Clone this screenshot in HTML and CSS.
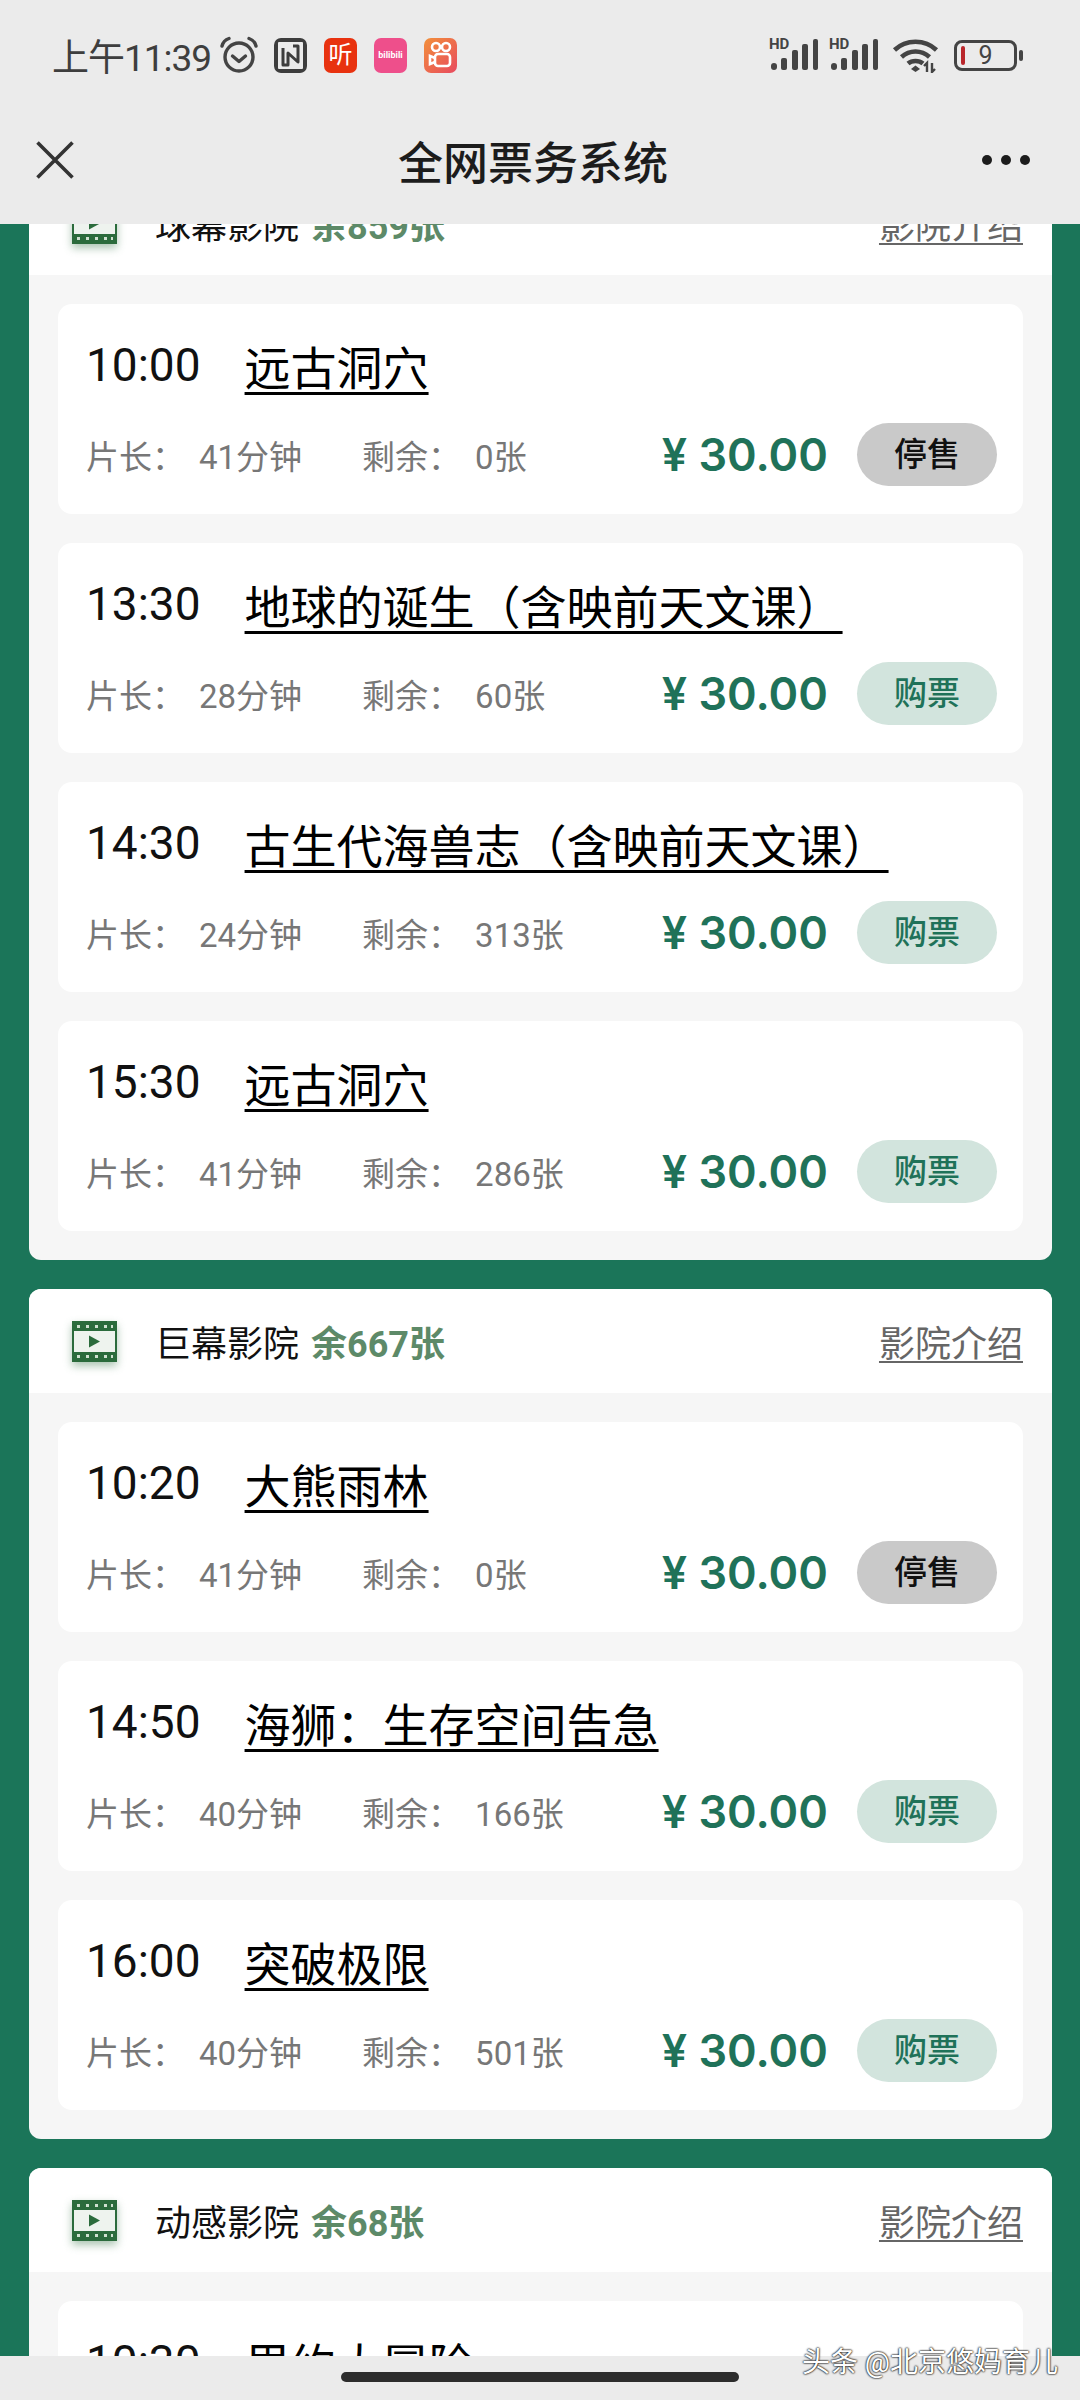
FILE: index.html
```html
<!DOCTYPE html>
<html lang="zh-CN">
<head>
  <meta charset="UTF-8">
  <meta name="viewport" content="width=device-width, initial-scale=1.0">
  <title>全网票务系统</title>
  <link rel="stylesheet" href="styles.css">
</head>
<body>
  <div class="page">
    <!-- Top Bar -->
    <header class="topbar">
      <div class="status">
        <div class="status-left">
          <span class="clock">上午11:39</span>
          <svg class="alarm" viewBox="0 0 38 38" fill="none" stroke="#444" stroke-width="3.4">
            <circle cx="19" cy="21" r="14"/>
            <path d="M12.5 20l6.500 5.500 6.500-5.500" stroke-linecap="round" stroke-linejoin="round"/>
            <path d="M2 10c1-4 4-6.500 7-7.500M36 10c-1-4-4-6.500-7-7.500" stroke-linecap="round"/>
          </svg>
          <svg class="app-icon" viewBox="0 0 33 35" fill="none" stroke="#3d3d3d">
            <rect x="2" y="2" width="29" height="31" rx="3" stroke-width="4"/>
            <path d="M9 10v17h5V15l10 9V8h-5" stroke-width="3" stroke-linejoin="round"/>
          </svg>
          <span class="app-icon app-ting">听</span>
          <span class="app-icon app-bili">bilibili</span>
          <svg class="app-icon app-kwai" viewBox="0 0 33 35" fill="none" stroke="#fff" stroke-width="2.600">
            <circle cx="12" cy="9" r="4"/>
            <circle cx="22" cy="9" r="4"/>
            <rect x="11" y="16" width="15" height="12" rx="3"/>
            <path d="M11 20l-5-2v8l5-2"/>
          </svg>
        </div>
        <div class="status-right">
          <div class="signal">
            <span class="hd">HD</span>
            <svg viewBox="0 0 50 34" fill="#444"><rect x="2" y="25" width="6" height="7" rx="3"/><rect x="12" y="20" width="6" height="12" rx="2"/><rect x="23" y="12" width="6" height="20" rx="2"/><rect x="33" y="6" width="6" height="26" rx="2"/><rect x="44" y="1" width="5" height="31" rx="2"/></svg>
          </div>
          <div class="signal">
            <span class="hd">HD</span>
            <svg viewBox="0 0 50 34" fill="#444"><rect x="2" y="25" width="6" height="7" rx="3"/><rect x="12" y="20" width="6" height="12" rx="2"/><rect x="23" y="12" width="6" height="20" rx="2"/><rect x="33" y="6" width="6" height="26" rx="2"/><rect x="44" y="1" width="5" height="31" rx="2"/></svg>
          </div>
          <svg class="wifi" viewBox="0 0 47 36" fill="none" stroke="#444" stroke-width="4.500">
            <path d="M2.500 13C14 2 33 2 44.500 13"/>
            <path d="M9.500 20c8-7.500 20-7.500 28 0"/>
            <path d="M16 26.500c4-3.500 11-3.500 15 0"/>
            <path d="M19 32l4.500-3.500 4.500 3.500-4.500 3z" fill="#444" stroke="none"/>
            <path d="M35 35v-9l-3 3M40 26v9l3-3" stroke-width="2.400"/>
          </svg>
          <div class="battery">
            <span class="battery-level"></span>
            <span class="battery-num">9</span>
          </div>
          <span class="battery-nub"></span>
        </div>
      </div>
      <nav class="navbar">
        <svg class="close" viewBox="0 0 38 38" fill="none" stroke="#333" stroke-width="3.600"><path d="M1.500 1.500l35 35M36.500 1.500l-35 35"/></svg>
        <h1>全网票务系统</h1>
        <div class="dots"><span></span><span></span><span></span></div>
      </nav>
    </header>

    <!-- Ticket List -->
    <main class="content">
      <div class="scroller">
        <section class="hall">
          <div class="hall-head">
            <svg class="film" viewBox="0 0 45 41"><use href="#film-icon"/></svg>
            <span class="hall-name">球幕影院</span>
            <span class="hall-left">余859张</span>
            <a class="hall-link">影院介绍</a>
          </div>
          <div class="rows">
            <div class="show">
              <div class="show-top"><span class="time">10:00</span><a class="movie">远古洞穴</a></div>
              <div class="show-bottom">
                <span class="label">片长：</span><span class="len">41分钟</span>
                <span class="label">剩余：</span><span class="num">0张</span>
                <span class="price">¥ 30.00</span><a class="btn btn-stop">停售</a>
              </div>
            </div>
            <div class="show">
              <div class="show-top"><span class="time">13:30</span><a class="movie">地球的诞生（含映前天文课）</a></div>
              <div class="show-bottom">
                <span class="label">片长：</span><span class="len">28分钟</span>
                <span class="label">剩余：</span><span class="num">60张</span>
                <span class="price">¥ 30.00</span><a class="btn">购票</a>
              </div>
            </div>
            <div class="show">
              <div class="show-top"><span class="time">14:30</span><a class="movie">古生代海兽志（含映前天文课）</a></div>
              <div class="show-bottom">
                <span class="label">片长：</span><span class="len">24分钟</span>
                <span class="label">剩余：</span><span class="num">313张</span>
                <span class="price">¥ 30.00</span><a class="btn">购票</a>
              </div>
            </div>
            <div class="show">
              <div class="show-top"><span class="time">15:30</span><a class="movie">远古洞穴</a></div>
              <div class="show-bottom">
                <span class="label">片长：</span><span class="len">41分钟</span>
                <span class="label">剩余：</span><span class="num">286张</span>
                <span class="price">¥ 30.00</span><a class="btn">购票</a>
              </div>
            </div>
          </div>
        </section>

        <section class="hall">
          <div class="hall-head">
            <svg class="film" viewBox="0 0 45 41"><use href="#film-icon"/></svg>
            <span class="hall-name">巨幕影院</span>
            <span class="hall-left">余667张</span>
            <a class="hall-link">影院介绍</a>
          </div>
          <div class="rows">
            <div class="show">
              <div class="show-top"><span class="time">10:20</span><a class="movie">大熊雨林</a></div>
              <div class="show-bottom">
                <span class="label">片长：</span><span class="len">41分钟</span>
                <span class="label">剩余：</span><span class="num">0张</span>
                <span class="price">¥ 30.00</span><a class="btn btn-stop">停售</a>
              </div>
            </div>
            <div class="show">
              <div class="show-top"><span class="time">14:50</span><a class="movie">海狮：生存空间告急</a></div>
              <div class="show-bottom">
                <span class="label">片长：</span><span class="len">40分钟</span>
                <span class="label">剩余：</span><span class="num">166张</span>
                <span class="price">¥ 30.00</span><a class="btn">购票</a>
              </div>
            </div>
            <div class="show">
              <div class="show-top"><span class="time">16:00</span><a class="movie">突破极限</a></div>
              <div class="show-bottom">
                <span class="label">片长：</span><span class="len">40分钟</span>
                <span class="label">剩余：</span><span class="num">501张</span>
                <span class="price">¥ 30.00</span><a class="btn">购票</a>
              </div>
            </div>
          </div>
        </section>

        <section class="hall">
          <div class="hall-head">
            <svg class="film" viewBox="0 0 45 41"><use href="#film-icon"/></svg>
            <span class="hall-name">动感影院</span>
            <span class="hall-left">余68张</span>
            <a class="hall-link">影院介绍</a>
          </div>
          <div class="rows">
            <div class="show">
              <div class="show-top"><span class="time">10:30</span><a class="movie">里约大冒险</a></div>
            </div>
          </div>
        </section>
      </div>
    </main>

    <!-- Bottom Gesture Bar -->
    <footer class="bottombar"><span class="handle"></span></footer>
    <div class="watermark">头条 @北京悠妈育儿</div>
  </div>

  <svg class="defs" width="0" height="0">
    <symbol id="film-icon" viewBox="0 0 45 41">
      <rect width="45" height="41" fill="#2b6b3c"/>
      <rect x="2" y="10" width="41" height="21" fill="#eef3ee"/>
      <path d="M17 14.500l11 6-11 6z" fill="#2b6b3c"/>
      <g fill="#cfe0d0">
        <rect x="5" y="4" width="3" height="3"/><rect x="14" y="4" width="3" height="3"/><rect x="23" y="4" width="3" height="3"/><rect x="32" y="4" width="3" height="3"/><rect x="39" y="4" width="2" height="3"/>
        <rect x="5" y="34" width="3" height="3"/><rect x="14" y="34" width="3" height="3"/><rect x="23" y="34" width="3" height="3"/><rect x="32" y="34" width="3" height="3"/><rect x="39" y="34" width="2" height="3"/>
      </g>
    </symbol>
  </svg>
</body>
</html>
```

FILE: styles.css
```css
/* General Styles */
body {
  margin: 0;
  font-family: Roboto, "Noto Sans CJK SC", sans-serif;
  background-color: #1b7559;
  color: #111;
}

.page {
  position: relative;
  display: flex;
  flex-direction: column;
  height: 2400px;
  overflow: hidden;
}

.defs {
  position: absolute;
}

/* Top Bar */
.topbar {
  flex: none;
  height: 224px;
  background-color: #ebebeb;
}

.status {
  display: flex;
  justify-content: space-between;
  height: 104px;
  padding: 36px 57px 0 52px;
  box-sizing: border-box;
}

.status-left,
.status-right {
  display: flex;
  align-items: center;
  height: 38px;
}

.clock {
  width: 168px;
  font-size: 37px;
  color: #3e3e3e;
  white-space: nowrap;
  letter-spacing: -1px;
}

.alarm {
  width: 38px;
  height: 38px;
  margin-right: 16px;
}

.app-icon {
  display: block;
  width: 33px;
  height: 35px;
  margin-right: 17px;
  border-radius: 7px;
  color: #fff;
  text-align: center;
  box-sizing: border-box;
}

.app-ting {
  background-color: #e8320f;
  font-size: 24px;
  line-height: 34px;
}

.app-bili {
  background-color: #ee4f8b;
  font-size: 9px;
  font-weight: 700;
  line-height: 35px;
  overflow: hidden;
}

.app-kwai {
  margin-right: 0;
  background: linear-gradient(135deg, #f2903a, #e84a5f);
}

.signal {
  position: relative;
  width: 50px;
  height: 34px;
  margin-right: 10px;
}

.signal svg {
  display: block;
  width: 50px;
  height: 34px;
}

.hd {
  position: absolute;
  left: 0;
  top: -3px;
  font-size: 15px;
  font-weight: 700;
  line-height: 18px;
  color: #444;
}

.wifi {
  width: 47px;
  height: 36px;
  margin: 0 15px 0 3px;
}

.battery {
  position: relative;
  display: flex;
  align-items: center;
  justify-content: center;
  width: 63px;
  height: 31px;
  border: 3px solid #444;
  border-radius: 8px;
  box-sizing: border-box;
}

.battery-level {
  position: absolute;
  left: 4px;
  top: 3px;
  width: 4px;
  height: 19px;
  background-color: #b9262b;
  border-radius: 2px;
}

.battery-num {
  font-size: 25px;
  line-height: 25px;
  color: #444;
}

.battery-nub {
  width: 4px;
  height: 11px;
  margin-left: 2px;
  background-color: #444;
  border-radius: 2px;
}

.navbar {
  display: grid;
  grid-template-columns: 1fr auto 1fr;
  align-items: center;
  height: 112px;
  padding: 0 50px 0 36px;
}

.close {
  width: 38px;
  height: 38px;
}

.navbar h1 {
  margin: 0;
  font-size: 45px;
  font-weight: 500;
  color: #1c1c1c;
}

.dots {
  display: flex;
  justify-content: flex-end;
  gap: 9px;
}

.dots span {
  width: 10px;
  height: 10px;
  background-color: #1c1c1c;
  border-radius: 50%;
}

/* Ticket List */
.content {
  flex: 1;
  min-height: 0;
  overflow: hidden;
}

.scroller {
  display: flex;
  flex-direction: column;
  gap: 29px;
  margin: -53px 28px 0 29px;
}

.hall {
  background-color: #f6f6f6;
  border-radius: 12px;
  overflow: hidden;
}

.hall-head {
  display: flex;
  align-items: center;
  height: 104px;
  padding: 0 29px 0 43px;
  background-color: #fff;
  font-size: 36px;
}

.film {
  width: 45px;
  height: 41px;
  margin-right: 38px;
  filter: drop-shadow(0 4px 4px rgba(43, 107, 60, 0.4));
}

.hall-left {
  margin-left: 12px;
  font-weight: 700;
  color: #5d8a68;
}

.hall-link {
  margin-left: auto;
  color: #666;
  text-decoration: underline;
  text-decoration-thickness: 2px;
  text-underline-offset: 4px;
}

.rows {
  display: flex;
  flex-direction: column;
  gap: 29px;
  padding: 29px;
}

.show {
  height: 210px;
  padding: 31px 26px 0 28px;
  background-color: #fff;
  border-radius: 14px;
  box-sizing: border-box;
}

.show-top {
  display: flex;
  align-items: center;
  height: 60px;
  font-size: 46px;
  white-space: nowrap;
}

.time {
  margin-right: 44px;
  color: #111;
}

.movie {
  color: #000;
  text-decoration: underline;
  text-decoration-thickness: 3px;
  text-underline-offset: 7px;
}

.show-bottom {
  display: flex;
  align-items: center;
  height: 63px;
  margin-top: 28px;
  font-size: 33px;
  color: #777;
  white-space: nowrap;
}

.label {
  margin-right: 14px;
}

.len {
  margin-right: 60px;
}

.price {
  margin-left: auto;
  margin-right: 29px;
  font-family: Inter, "Noto Sans CJK SC", sans-serif;
  font-size: 45px;
  font-weight: 600;
  color: #1f7259;
}

.btn {
  width: 140px;
  height: 63px;
  background-color: #d2e4dd;
  border-radius: 32px;
  font-size: 33px;
  font-weight: 500;
  line-height: 63px;
  text-align: center;
  color: #1f7259;
}

.btn-stop {
  background-color: #c9c9c9;
  color: #111;
}

/* Bottom Gesture Bar */
.bottombar {
  display: flex;
  justify-content: center;
  flex: none;
  height: 44px;
  padding-top: 16px;
  background-color: #ebebeb;
  box-sizing: border-box;
}

.handle {
  width: 398px;
  height: 10px;
  background-color: #2c2c2c;
  border-radius: 5px;
}

.watermark {
  position: absolute;
  right: 22px;
  top: 2340px;
  font-size: 28px;
  color: #fff;
  text-shadow: 0 0 2px #000, 0 0 2px #000;
}
```
